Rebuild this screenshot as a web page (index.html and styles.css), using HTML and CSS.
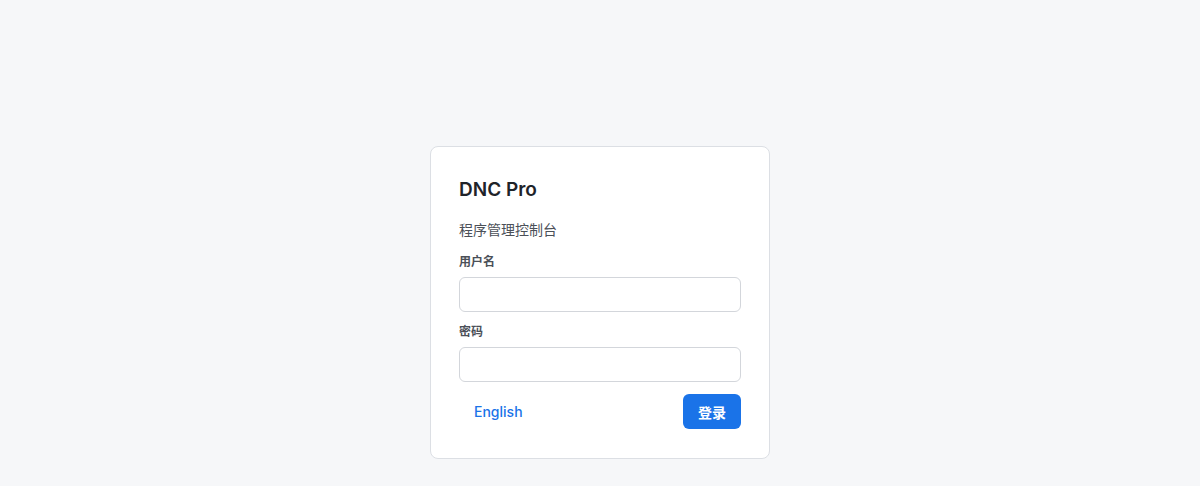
FILE: index.html
```html
<!DOCTYPE html>
<html lang="zh">
<head>
<meta charset="utf-8">
<title>DNC Pro</title>
<link rel="stylesheet" href="styles.css">
</head>
<body>
<main class="page">
  <form class="card">
    <h1 class="title">DNC Pro</h1>
    <p class="subtitle">程序管理控制台</p>
    <label class="label" for="u">用户名</label>
    <input class="input" id="u" type="text">
    <label class="label label-second" for="p">密码</label>
    <input class="input" id="p" type="password">
    <div class="actions">
      <button type="button" class="btn-link">English</button>
      <button type="button" class="btn-primary">登录</button>
    </div>
  </form>
</main>
</body>
</html>
```
FILE: styles.css
```css
* { box-sizing: border-box; }
html, body { margin: 0; padding: 0; }
body {
  background: #f6f7f9;
  font-family: Inter, "Noto Sans CJK SC", sans-serif;
  color: #1f2329;
}
.page {
  display: flex;
  justify-content: center;
  padding-top: 146px;
}
.card {
  width: 340px;
  background: #ffffff;
  border: 1px solid #dcdfe4;
  border-radius: 8px;
  padding: 28px 28px 29px;
  display: flex;
  flex-direction: column;
}
.title {
  margin: 0;
  font-size: 19px;
  line-height: 30px;
  font-weight: 600;
  color: #1f2329;
}
.subtitle {
  margin: 15px 0 0;
  font-size: 14px;
  line-height: 20px;
  color: #4b5058;
}
.label {
  margin-top: 13px;
  font-size: 12px;
  line-height: 18px;
  font-weight: 600;
  color: #4b5058;
}
.label-second { margin-top: 11px; }
.input {
  margin-top: 6px;
  height: 35px;
  width: 100%;
  border: 1px solid #d3d6db;
  border-radius: 6px;
  background: #fff;
  font: inherit;
  padding: 0 10px;
}
.actions {
  margin-top: 12px;
  display: flex;
  justify-content: space-between;
  align-items: center;
}
.btn-link {
  height: 35px;
  border: none;
  background: transparent;
  color: #1a73e8;
  font: inherit;
  font-size: 14px;
  font-weight: 500;
  padding: 0 15px;
  cursor: pointer;
}
.btn-primary {
  height: 35px;
  width: 58px;
  border: none;
  border-radius: 6px;
  background: #1a73e8;
  color: #fff;
  font: inherit;
  font-size: 14px;
  font-weight: 700;
  padding: 0;
  cursor: pointer;
}
```
